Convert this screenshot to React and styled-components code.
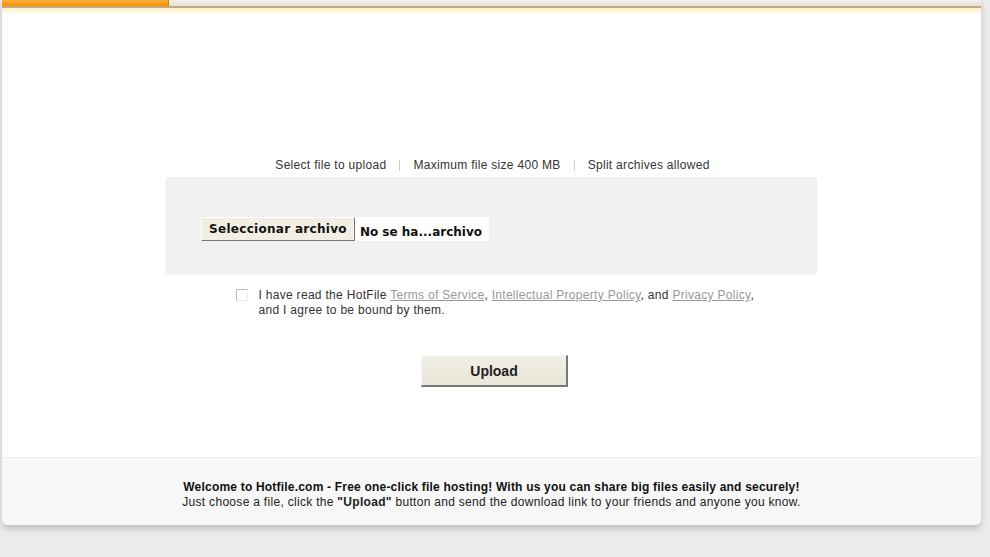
import React from "react";
import styled, { createGlobalStyle } from "styled-components";

const Global = createGlobalStyle`
  html, body {
    margin: 0;
    padding: 0;
    background: #ebebeb;
    font-family: "Liberation Sans", Arial, sans-serif;
    color: #222;
  }
`;

const Page = styled.div`
  width: 990px;
  height: 557px;
  overflow: hidden;
  background: #ebebeb;
`;

const Panel = styled.div`
  margin: 0 9px 0 2px;
  background: #fff;
  border-radius: 0 0 6px 6px;
  box-shadow: 0 4px 6px rgba(0, 0, 0, 0.18);
  overflow: hidden;
`;

const TopBar = styled.div`
  display: flex;
  height: 6px;
  background: linear-gradient(#f3f2ee, #e4e0d6);
  border-bottom: 2px solid #c6a87c;
  margin-left: -2px;
`;

const Tab = styled.div`
  width: 168px;
  background: linear-gradient(#fbb040, #f39200);
  border-right: 1px solid #d77f00;
`;

const Glow = styled.div`
  height: 6px;
  background: linear-gradient(#fff0c4, #fffdf6);
`;

const Body = styled.div`
  display: flex;
  flex-direction: column;
  align-items: center;
  padding: 144px 0 0;
  height: 299px;
`;

const InfoRow = styled.div`
  display: flex;
  align-items: center;
  gap: 13px;
  font-size: 12px;
  letter-spacing: 0.3px;
  color: #333;
  margin-left: 2px;
`;

const Sep = styled.span`
  width: 1px;
  height: 11px;
  background: #ccc;
`;

const UploadBox = styled.div`
  width: 651px;
  height: 96px;
  margin-top: 5px;
  background: #f0f0f0;
  border-radius: 3px;
  box-shadow: 0 1px 2px rgba(0, 0, 0, 0.08);
  display: flex;
  align-items: center;
  padding: 8px 0 0 35px;
  box-sizing: border-box;
`;

const FileField = styled.div`
  display: flex;
  align-items: center;
  background: #fff;
  padding-right: 3px;
`;

const ChooseButton = styled.button`
  font-family: "DejaVu Sans", Verdana, sans-serif;
  font-size: 12px;
  font-weight: bold;
  letter-spacing: 0.3px;
  color: #111;
  background: #f1efe3;
  border: 1px solid #fff;
  border-right-color: #777;
  border-bottom-color: #777;
  padding: 3px 7px 4px;
  height: 24px;
`;

const FileName = styled.span`
  font-family: "DejaVu Sans", Verdana, sans-serif;
  font-size: 12px;
  font-weight: bold;
  color: #111;
  padding: 5px 4px 0 5px;
`;

const Terms = styled.label`
  display: flex;
  gap: 11px;
  margin-top: 15px;
  margin-left: 8px;
  width: 520px;
  font-size: 12px;
  letter-spacing: 0.3px;
  line-height: 15px;
  color: #333;
  white-space: nowrap;
`;

const Check = styled.span`
  flex: none;
  width: 10px;
  height: 10px;
  margin-top: 1px;
  border: 1px solid #bbb;
  border-right-color: #eee;
  border-bottom-color: #eee;
  background: #fff;
`;

const Link = styled.a`
  color: #999;
  text-decoration: underline;
`;

const UploadButton = styled.button`
  margin-top: 37px;
  margin-left: 6px;
  width: 147px;
  height: 32px;
  font-family: "Liberation Sans", Arial, sans-serif;
  font-size: 14px;
  font-weight: bold;
  color: #222;
  background: linear-gradient(#f1efe6, #e9e6d8);
  border: 1px solid #f8f8f8;
  border-right: 2px solid #777;
  border-bottom: 2px solid #777;
`;

const Footer = styled.div`
  background: #f7f7f7;
  border-top: 1px solid #eee;
  height: 68px;
  box-sizing: border-box;
  padding-top: 22px;
  text-align: center;
  font-size: 12px;
  letter-spacing: 0.3px;
  line-height: 15px;
  color: #222;
`;

const Bold = styled.div`
  font-weight: bold;
  letter-spacing: 0.2px;
  color: #111;
`;

export default function App() {
  return (
    <Page>
      <Global />
      <Panel>
        <TopBar>
          <Tab />
        </TopBar>
        <Glow />
        <Body>
          <InfoRow>
            <span>Select file to upload</span>
            <Sep />
            <span>Maximum file size 400 MB</span>
            <Sep />
            <span>Split archives allowed</span>
          </InfoRow>
          <UploadBox>
            <FileField>
              <ChooseButton>Seleccionar archivo</ChooseButton>
              <FileName>No se ha...archivo</FileName>
            </FileField>
          </UploadBox>
          <Terms>
            <Check />
            <span>
              I have read the HotFile <Link>Terms of Service</Link>,{" "}
              <Link>Intellectual Property Policy</Link>, and{" "}
              <Link>Privacy Policy</Link>,
              <br />
              and I agree to be bound by them.
            </span>
          </Terms>
          <UploadButton>Upload</UploadButton>
        </Body>
        <Footer>
          <Bold>
            Welcome to Hotfile.com - Free one-click file hosting! With us you can
            share big files easily and securely!
          </Bold>
          <div>
            Just choose a file, click the <b>"Upload"</b> button and send the
            download link to your friends and anyone you know.
          </div>
        </Footer>
      </Panel>
    </Page>
  );
}
